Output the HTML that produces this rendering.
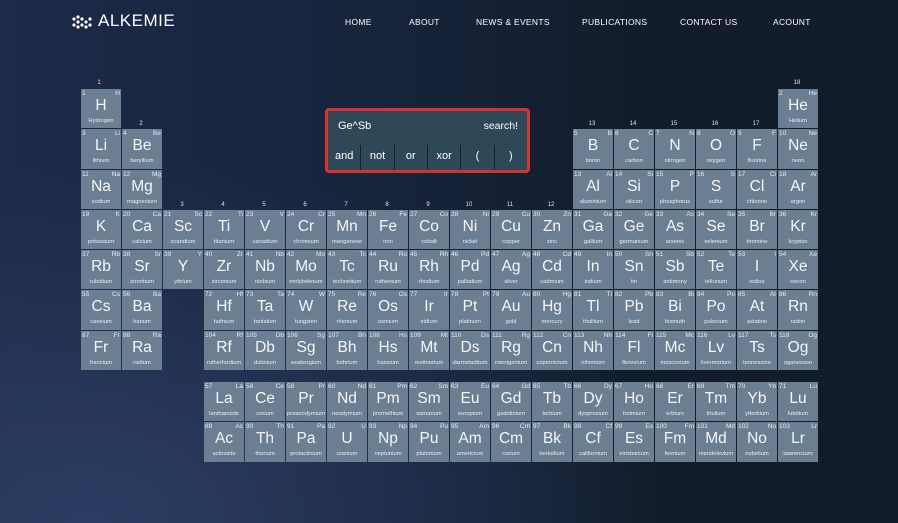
<!DOCTYPE html><html><head><meta charset="utf-8"><style>
*{margin:0;padding:0;box-sizing:border-box}
body{width:898px;height:523px;overflow:hidden;font-family:"Liberation Sans",sans-serif;color:#fff;background:radial-gradient(ellipse at 10% 100%,#2c3c62 0%,rgba(30,42,70,0) 50%),linear-gradient(90deg,#1d2a48 0%,#17233a 45%,#121d2c 70%,#111b2a 100%)}
.logo{position:absolute;left:72px;top:11px;font-size:17px;letter-spacing:0.5px}
.logo svg{vertical-align:-3px;margin-right:4px}
.nav span{position:absolute;top:17px;font-size:8.5px;letter-spacing:.3px}
.pt{position:absolute;left:81px;top:89px;display:grid;grid-template-columns:repeat(18,40px);grid-template-rows:repeat(7,39.3px) 10px 39.3px 39.3px;gap:1px}
.c{background:#6c7e91;position:relative;overflow:hidden}
.c i{position:absolute;left:1px;top:1px;font-style:normal;font-size:6.5px;color:#e8eef4}
.c s{position:absolute;right:1px;top:1px;text-decoration:none;font-size:6.5px;color:#e8eef4}
.c b{position:absolute;left:0;right:0;top:8px;text-align:center;font-weight:normal;font-size:15.5px;color:#f4f7fa}
.c u{position:absolute;left:-4px;right:-4px;top:29px;text-align:center;text-decoration:none;font-size:5.8px;color:#e8eef4;white-space:nowrap}
.g{position:absolute;font-size:6px;color:#dfe6ee;width:40px;text-align:center}
.sb{position:absolute;left:325px;top:108px;width:205px;height:65px;border:3px solid #d5332d;border-radius:4px;background:#2e4858}
.sb .q{position:absolute;left:10px;top:9px;font-size:11px}
.sb .s{position:absolute;right:9px;top:9px;font-size:10.5px}
.sb .r{position:absolute;left:0;right:0;top:34px;height:25px;display:flex}
.sb .r span{flex:1;text-align:center;font-size:11px;line-height:22px;border-left:1px solid #15222c}
.sb .r span:first-child{border-left:none}
</style></head><body>
<div class="logo"><svg width="22" height="14" viewBox="0 0 22 14"><g fill="#fff"><circle cx="2" cy="4" r="1.6"/><circle cx="6" cy="2" r="1.6"/><circle cx="6" cy="7" r="1.6"/><circle cx="2" cy="10" r="1.6"/><circle cx="10" cy="4" r="1.6"/><circle cx="10" cy="10" r="1.6"/><circle cx="14" cy="7" r="1.6"/><circle cx="14" cy="12" r="1.6"/><circle cx="18" cy="4" r="1.6"/><circle cx="18" cy="10" r="1.6"/><circle cx="6" cy="12" r="1.6"/></g></svg>ALKEMIE</div>
<div class="nav"><span style="left:345px">HOME</span><span style="left:409px">ABOUT</span><span style="left:476px">NEWS &amp; EVENTS</span><span style="left:582px">PUBLICATIONS</span><span style="left:680px">CONTACT US</span><span style="left:773px">ACOUNT</span></div>
<div class="g" style="left:79px;top:80px">1</div><div class="g" style="left:777px;top:80px">18</div>
<div class="g" style="left:121px;top:121px">2</div><div class="g" style="left:572px;top:121px">13</div><div class="g" style="left:613px;top:121px">14</div><div class="g" style="left:654px;top:121px">15</div><div class="g" style="left:695px;top:121px">16</div><div class="g" style="left:736px;top:121px">17</div>
<div class="g" style="left:162px;top:202px">3</div><div class="g" style="left:203px;top:202px">4</div><div class="g" style="left:244px;top:202px">5</div><div class="g" style="left:285px;top:202px">6</div><div class="g" style="left:326px;top:202px">7</div><div class="g" style="left:367px;top:202px">8</div><div class="g" style="left:408px;top:202px">9</div><div class="g" style="left:449px;top:202px">10</div><div class="g" style="left:490px;top:202px">11</div><div class="g" style="left:531px;top:202px">12</div>
<div class="pt">
<div class="c" style="grid-area:1/1"><i>1</i><s>H</s><b>H</b><u>Hydrogen</u></div>
<div class="c" style="grid-area:1/18"><i>2</i><s>He</s><b>He</b><u>Helium</u></div>
<div class="c" style="grid-area:2/1"><i>3</i><s>Li</s><b>Li</b><u>lithium</u></div>
<div class="c" style="grid-area:2/2"><i>4</i><s>Be</s><b>Be</b><u>beryllium</u></div>
<div class="c" style="grid-area:2/13"><i>5</i><s>B</s><b>B</b><u>boron</u></div>
<div class="c" style="grid-area:2/14"><i>6</i><s>C</s><b>C</b><u>carbon</u></div>
<div class="c" style="grid-area:2/15"><i>7</i><s>N</s><b>N</b><u>nitrogen</u></div>
<div class="c" style="grid-area:2/16"><i>8</i><s>O</s><b>O</b><u>oxygen</u></div>
<div class="c" style="grid-area:2/17"><i>9</i><s>F</s><b>F</b><u>fluorine</u></div>
<div class="c" style="grid-area:2/18"><i>10</i><s>Ne</s><b>Ne</b><u>neon</u></div>
<div class="c" style="grid-area:3/1"><i>11</i><s>Na</s><b>Na</b><u>sodium</u></div>
<div class="c" style="grid-area:3/2"><i>12</i><s>Mg</s><b>Mg</b><u>magnesium</u></div>
<div class="c" style="grid-area:3/13"><i>13</i><s>Al</s><b>Al</b><u>aluminium</u></div>
<div class="c" style="grid-area:3/14"><i>14</i><s>Si</s><b>Si</b><u>silicon</u></div>
<div class="c" style="grid-area:3/15"><i>15</i><s>P</s><b>P</b><u>phosphorus</u></div>
<div class="c" style="grid-area:3/16"><i>16</i><s>S</s><b>S</b><u>sulfur</u></div>
<div class="c" style="grid-area:3/17"><i>17</i><s>Cl</s><b>Cl</b><u>chlorine</u></div>
<div class="c" style="grid-area:3/18"><i>18</i><s>Ar</s><b>Ar</b><u>argon</u></div>
<div class="c" style="grid-area:4/1"><i>19</i><s>K</s><b>K</b><u>potassium</u></div>
<div class="c" style="grid-area:4/2"><i>20</i><s>Ca</s><b>Ca</b><u>calcium</u></div>
<div class="c" style="grid-area:4/3"><i>21</i><s>Sc</s><b>Sc</b><u>scandium</u></div>
<div class="c" style="grid-area:4/4"><i>22</i><s>Ti</s><b>Ti</b><u>titanium</u></div>
<div class="c" style="grid-area:4/5"><i>23</i><s>V</s><b>V</b><u>vanadium</u></div>
<div class="c" style="grid-area:4/6"><i>24</i><s>Cr</s><b>Cr</b><u>chromium</u></div>
<div class="c" style="grid-area:4/7"><i>25</i><s>Mn</s><b>Mn</b><u>manganese</u></div>
<div class="c" style="grid-area:4/8"><i>26</i><s>Fe</s><b>Fe</b><u>iron</u></div>
<div class="c" style="grid-area:4/9"><i>27</i><s>Co</s><b>Co</b><u>cobalt</u></div>
<div class="c" style="grid-area:4/10"><i>28</i><s>Ni</s><b>Ni</b><u>nickel</u></div>
<div class="c" style="grid-area:4/11"><i>29</i><s>Cu</s><b>Cu</b><u>copper</u></div>
<div class="c" style="grid-area:4/12"><i>30</i><s>Zn</s><b>Zn</b><u>zinc</u></div>
<div class="c" style="grid-area:4/13"><i>31</i><s>Ga</s><b>Ga</b><u>gallium</u></div>
<div class="c" style="grid-area:4/14"><i>32</i><s>Ge</s><b>Ge</b><u>germanium</u></div>
<div class="c" style="grid-area:4/15"><i>33</i><s>As</s><b>As</b><u>arsenic</u></div>
<div class="c" style="grid-area:4/16"><i>34</i><s>Se</s><b>Se</b><u>selenium</u></div>
<div class="c" style="grid-area:4/17"><i>35</i><s>Br</s><b>Br</b><u>bromine</u></div>
<div class="c" style="grid-area:4/18"><i>36</i><s>Kr</s><b>Kr</b><u>krypton</u></div>
<div class="c" style="grid-area:5/1"><i>37</i><s>Rb</s><b>Rb</b><u>rubidium</u></div>
<div class="c" style="grid-area:5/2"><i>38</i><s>Sr</s><b>Sr</b><u>strontium</u></div>
<div class="c" style="grid-area:5/3"><i>39</i><s>Y</s><b>Y</b><u>yttrium</u></div>
<div class="c" style="grid-area:5/4"><i>40</i><s>Zr</s><b>Zr</b><u>zirconium</u></div>
<div class="c" style="grid-area:5/5"><i>41</i><s>Nb</s><b>Nb</b><u>niobium</u></div>
<div class="c" style="grid-area:5/6"><i>42</i><s>Mo</s><b>Mo</b><u>molybdenum</u></div>
<div class="c" style="grid-area:5/7"><i>43</i><s>Tc</s><b>Tc</b><u>technetium</u></div>
<div class="c" style="grid-area:5/8"><i>44</i><s>Ru</s><b>Ru</b><u>ruthenium</u></div>
<div class="c" style="grid-area:5/9"><i>45</i><s>Rh</s><b>Rh</b><u>rhodium</u></div>
<div class="c" style="grid-area:5/10"><i>46</i><s>Pd</s><b>Pd</b><u>palladium</u></div>
<div class="c" style="grid-area:5/11"><i>47</i><s>Ag</s><b>Ag</b><u>silver</u></div>
<div class="c" style="grid-area:5/12"><i>48</i><s>Cd</s><b>Cd</b><u>cadmium</u></div>
<div class="c" style="grid-area:5/13"><i>49</i><s>In</s><b>In</b><u>indium</u></div>
<div class="c" style="grid-area:5/14"><i>50</i><s>Sn</s><b>Sn</b><u>tin</u></div>
<div class="c" style="grid-area:5/15"><i>51</i><s>Sb</s><b>Sb</b><u>antimony</u></div>
<div class="c" style="grid-area:5/16"><i>52</i><s>Te</s><b>Te</b><u>tellurium</u></div>
<div class="c" style="grid-area:5/17"><i>53</i><s>I</s><b>I</b><u>iodine</u></div>
<div class="c" style="grid-area:5/18"><i>54</i><s>Xe</s><b>Xe</b><u>xenon</u></div>
<div class="c" style="grid-area:6/1"><i>55</i><s>Cs</s><b>Cs</b><u>caesium</u></div>
<div class="c" style="grid-area:6/2"><i>56</i><s>Ba</s><b>Ba</b><u>barium</u></div>
<div class="c" style="grid-area:6/4"><i>72</i><s>Hf</s><b>Hf</b><u>hafnium</u></div>
<div class="c" style="grid-area:6/5"><i>73</i><s>Ta</s><b>Ta</b><u>tantalum</u></div>
<div class="c" style="grid-area:6/6"><i>74</i><s>W</s><b>W</b><u>tungsten</u></div>
<div class="c" style="grid-area:6/7"><i>75</i><s>Re</s><b>Re</b><u>rhenium</u></div>
<div class="c" style="grid-area:6/8"><i>76</i><s>Os</s><b>Os</b><u>osmium</u></div>
<div class="c" style="grid-area:6/9"><i>77</i><s>Ir</s><b>Ir</b><u>iridium</u></div>
<div class="c" style="grid-area:6/10"><i>78</i><s>Pt</s><b>Pt</b><u>platinum</u></div>
<div class="c" style="grid-area:6/11"><i>79</i><s>Au</s><b>Au</b><u>gold</u></div>
<div class="c" style="grid-area:6/12"><i>80</i><s>Hg</s><b>Hg</b><u>mercury</u></div>
<div class="c" style="grid-area:6/13"><i>81</i><s>Tl</s><b>Tl</b><u>thallium</u></div>
<div class="c" style="grid-area:6/14"><i>82</i><s>Pb</s><b>Pb</b><u>lead</u></div>
<div class="c" style="grid-area:6/15"><i>83</i><s>Bi</s><b>Bi</b><u>bismuth</u></div>
<div class="c" style="grid-area:6/16"><i>84</i><s>Po</s><b>Po</b><u>polonium</u></div>
<div class="c" style="grid-area:6/17"><i>85</i><s>At</s><b>At</b><u>astatine</u></div>
<div class="c" style="grid-area:6/18"><i>86</i><s>Rn</s><b>Rn</b><u>radon</u></div>
<div class="c" style="grid-area:7/1"><i>87</i><s>Fr</s><b>Fr</b><u>francium</u></div>
<div class="c" style="grid-area:7/2"><i>88</i><s>Ra</s><b>Ra</b><u>radium</u></div>
<div class="c" style="grid-area:7/4"><i>104</i><s>Rf</s><b>Rf</b><u>rutherfordium</u></div>
<div class="c" style="grid-area:7/5"><i>105</i><s>Db</s><b>Db</b><u>dubnium</u></div>
<div class="c" style="grid-area:7/6"><i>106</i><s>Sg</s><b>Sg</b><u>seaborgium</u></div>
<div class="c" style="grid-area:7/7"><i>107</i><s>Bh</s><b>Bh</b><u>bohrium</u></div>
<div class="c" style="grid-area:7/8"><i>108</i><s>Hs</s><b>Hs</b><u>hassium</u></div>
<div class="c" style="grid-area:7/9"><i>109</i><s>Mt</s><b>Mt</b><u>meitnerium</u></div>
<div class="c" style="grid-area:7/10"><i>110</i><s>Ds</s><b>Ds</b><u>darmstadtium</u></div>
<div class="c" style="grid-area:7/11"><i>111</i><s>Rg</s><b>Rg</b><u>roentgenium</u></div>
<div class="c" style="grid-area:7/12"><i>112</i><s>Cn</s><b>Cn</b><u>copernicium</u></div>
<div class="c" style="grid-area:7/13"><i>113</i><s>Nh</s><b>Nh</b><u>nihonium</u></div>
<div class="c" style="grid-area:7/14"><i>114</i><s>Fl</s><b>Fl</b><u>flerovium</u></div>
<div class="c" style="grid-area:7/15"><i>115</i><s>Mc</s><b>Mc</b><u>moscovium</u></div>
<div class="c" style="grid-area:7/16"><i>116</i><s>Lv</s><b>Lv</b><u>livermorium</u></div>
<div class="c" style="grid-area:7/17"><i>117</i><s>Ts</s><b>Ts</b><u>tennessine</u></div>
<div class="c" style="grid-area:7/18"><i>118</i><s>Og</s><b>Og</b><u>oganesson</u></div>
<div class="c" style="grid-area:9/4"><i>57</i><s>La</s><b>La</b><u>lanthanoids</u></div>
<div class="c" style="grid-area:9/5"><i>58</i><s>Ce</s><b>Ce</b><u>cerium</u></div>
<div class="c" style="grid-area:9/6"><i>59</i><s>Pr</s><b>Pr</b><u>praseodymium</u></div>
<div class="c" style="grid-area:9/7"><i>60</i><s>Nd</s><b>Nd</b><u>neodymium</u></div>
<div class="c" style="grid-area:9/8"><i>61</i><s>Pm</s><b>Pm</b><u>promethium</u></div>
<div class="c" style="grid-area:9/9"><i>62</i><s>Sm</s><b>Sm</b><u>samarium</u></div>
<div class="c" style="grid-area:9/10"><i>63</i><s>Eu</s><b>Eu</b><u>europium</u></div>
<div class="c" style="grid-area:9/11"><i>64</i><s>Gd</s><b>Gd</b><u>gadolinium</u></div>
<div class="c" style="grid-area:9/12"><i>65</i><s>Tb</s><b>Tb</b><u>terbium</u></div>
<div class="c" style="grid-area:9/13"><i>66</i><s>Dy</s><b>Dy</b><u>dysprosium</u></div>
<div class="c" style="grid-area:9/14"><i>67</i><s>Ho</s><b>Ho</b><u>holmium</u></div>
<div class="c" style="grid-area:9/15"><i>68</i><s>Er</s><b>Er</b><u>erbium</u></div>
<div class="c" style="grid-area:9/16"><i>69</i><s>Tm</s><b>Tm</b><u>thulium</u></div>
<div class="c" style="grid-area:9/17"><i>70</i><s>Yb</s><b>Yb</b><u>ytterbium</u></div>
<div class="c" style="grid-area:9/18"><i>71</i><s>Lu</s><b>Lu</b><u>lutetium</u></div>
<div class="c" style="grid-area:10/4"><i>89</i><s>Ac</s><b>Ac</b><u>actinoids</u></div>
<div class="c" style="grid-area:10/5"><i>90</i><s>Th</s><b>Th</b><u>thorium</u></div>
<div class="c" style="grid-area:10/6"><i>91</i><s>Pa</s><b>Pa</b><u>protactinium</u></div>
<div class="c" style="grid-area:10/7"><i>92</i><s>U</s><b>U</b><u>uranium</u></div>
<div class="c" style="grid-area:10/8"><i>93</i><s>Np</s><b>Np</b><u>neptunium</u></div>
<div class="c" style="grid-area:10/9"><i>94</i><s>Pu</s><b>Pu</b><u>plutonium</u></div>
<div class="c" style="grid-area:10/10"><i>95</i><s>Am</s><b>Am</b><u>americium</u></div>
<div class="c" style="grid-area:10/11"><i>96</i><s>Cm</s><b>Cm</b><u>curium</u></div>
<div class="c" style="grid-area:10/12"><i>97</i><s>Bk</s><b>Bk</b><u>berkelium</u></div>
<div class="c" style="grid-area:10/13"><i>98</i><s>Cf</s><b>Cf</b><u>californium</u></div>
<div class="c" style="grid-area:10/14"><i>99</i><s>Es</s><b>Es</b><u>einsteinium</u></div>
<div class="c" style="grid-area:10/15"><i>100</i><s>Fm</s><b>Fm</b><u>fermium</u></div>
<div class="c" style="grid-area:10/16"><i>101</i><s>Md</s><b>Md</b><u>mendelevium</u></div>
<div class="c" style="grid-area:10/17"><i>102</i><s>No</s><b>No</b><u>nobelium</u></div>
<div class="c" style="grid-area:10/18"><i>103</i><s>Lr</s><b>Lr</b><u>lawrencium</u></div>
</div>
<div class="sb"><div class="q">Ge^Sb</div><div class="s">search!</div><div class="r"><span>and</span><span>not</span><span>or</span><span>xor</span><span>(</span><span>)</span></div></div>
</body></html>
